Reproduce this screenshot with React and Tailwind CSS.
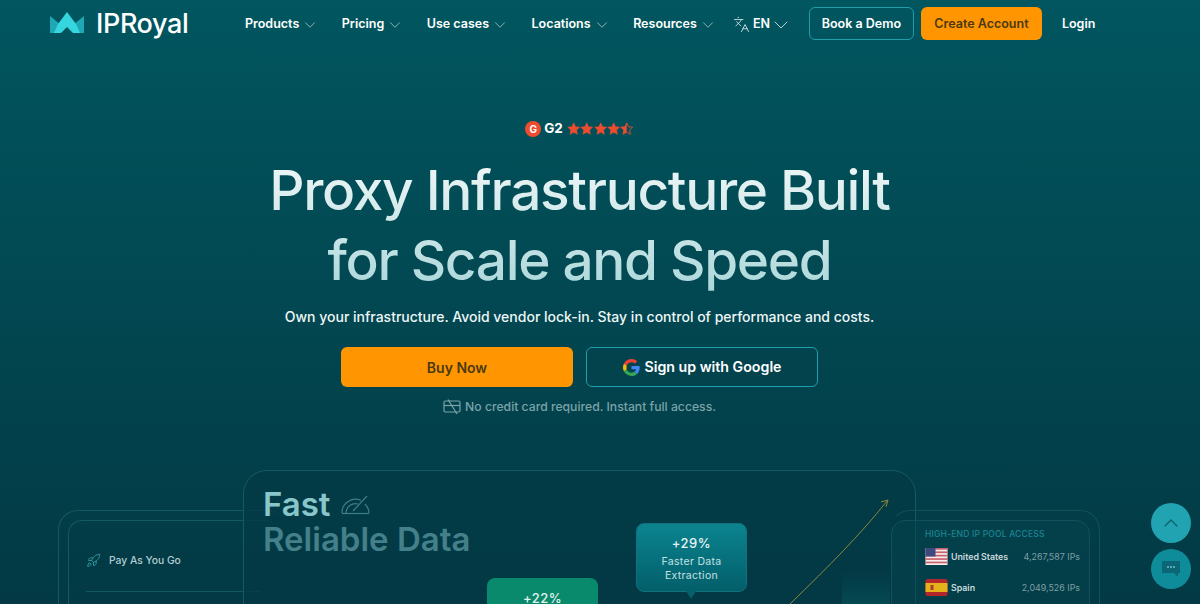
import React from "react";
import { ChevronDown, ChevronUp, Languages, Rocket } from "lucide-react";

const navItems = ["Products", "Pricing", "Use cases", "Locations", "Resources"];

function Logo() {
  return (
    <svg width="34" height="21" viewBox="0 0 34 21" className="mb-[3px]">
      <path d="M0 4 L11 13 L6 21 H0 Z" fill="#1ea7b5" />
      <path d="M34 4 L23 13 L28 21 H34 Z" fill="#1ea7b5" />
      <path d="M17 0 L26 12 L30 21 H23 L17 15 L11 21 H4 L8 12 Z" fill="#35d6e0" />
    </svg>
  );
}

function GoogleIcon() {
  return (
    <svg width="17" height="17" viewBox="0 0 48 48">
      <path fill="#EA4335" d="M24 9.500c3.500 0 6.700 1.200 9.200 3.600l6.900-6.900C35.900 2.400 30.500 0 24 0 14.600 0 6.500 5.400 2.600 13.200l8 6.200C12.500 13.700 17.800 9.500 24 9.500z" />
      <path fill="#4285F4" d="M47 24.500c0-1.600-.1-3.100-.4-4.500H24v9h12.900c-.6 3-2.200 5.500-4.700 7.200l7.700 6C44.400 37.900 47 31.800 47 24.500z" />
      <path fill="#FBBC05" d="M10.600 28.600c-.5-1.400-.8-3-.8-4.600s.3-3.200.8-4.600l-8-6.200C.9 16.500 0 20.100 0 24s.9 7.500 2.600 10.800l8-6.200z" />
      <path fill="#34A853" d="M24 48c6.500 0 11.900-2.100 15.900-5.800l-7.700-6c-2.200 1.500-4.900 2.300-8.200 2.300-6.200 0-11.500-4.200-13.400-9.900l-8 6.200C6.500 42.600 14.600 48 24 48z" />
    </svg>
  );
}

function G2Badge() {
  return (
    <span className="flex h-4 w-4 items-center justify-center rounded-full bg-[#ef4c2f] text-[10px] font-bold leading-none text-white">
      G
    </span>
  );
}

function Star({ half }) {
  return (
    <svg width="13.4" height="13.4" viewBox="0 0 24 24">
      <path
        d="M12 1.500l3.200 6.900 7.500.9-5.500 5.200 1.400 7.500L12 18.300l-6.600 3.700 1.400-7.500L1.300 9.300l7.500-.9z"
        fill={half ? "none" : "#ef4c2f"}
        stroke="#ef4c2f"
        strokeWidth={half ? 1.5 : 1}
      />
      {half && <path d="M12 1.500l-3.200 6.900-7.500.9 5.500 5.200-1.400 7.500L12 18.300z" fill="#ef4c2f" />}
    </svg>
  );
}

function NoCardIcon() {
  return (
    <svg width="18" height="16" viewBox="0 0 18 16" fill="none" stroke="#7ba3a8" strokeWidth="1.2">
      <rect x="1" y="2" width="16" height="11" rx="1.500" />
      <path d="M1 6.500H17" />
      <path d="M5 0.500 L14 15" />
    </svg>
  );
}

function GaugeIcon() {
  return (
    <svg width="29" height="21" viewBox="0 0 29 21" fill="none" stroke="#3f7f86" strokeWidth="1.2">
      <path d="M1 19 A13.500 13.500 0 0 1 20 6.500" />
      <path d="M5 19 A9.500 9.500 0 0 1 17 10" />
      <path d="M24 10 A13.500 13.500 0 0 1 28 19" />
      <path d="M1 19.500 H28" />
      <path d="M12 17 L26 2" />
    </svg>
  );
}

function UsFlag() {
  return (
    <svg width="23" height="17" viewBox="0 0 22 17">
      <rect width="22" height="17" fill="#f4eeee" />
      <rect y="0" width="22" height="1.700" fill="#c9606b" />
      <rect y="3.400" width="22" height="1.700" fill="#c9606b" />
      <rect y="6.800" width="22" height="1.700" fill="#c9606b" />
      <rect y="10.200" width="22" height="1.700" fill="#c9606b" />
      <rect y="13.600" width="22" height="1.700" fill="#c9606b" />
      <rect width="10" height="8.500" fill="#3c4a80" />
    </svg>
  );
}

function EsFlag() {
  return (
    <svg width="23" height="17" viewBox="0 0 22 17">
      <rect width="22" height="17" rx="2" fill="#b3262c" />
      <rect y="4" width="22" height="9" fill="#e5b21c" />
      <rect x="5" y="6" width="3" height="5" fill="#a8402a" />
    </svg>
  );
}

function CountryRow({ flag, name, count }) {
  return (
    <div className="flex items-center text-[8.8px] font-semibold">
      {flag}
      <span className="ml-[3px] text-[#c9dadd]">{name}</span>
      <span className="ml-auto text-[8.9px] font-normal text-[#7f9ea4]">{count}</span>
    </div>
  );
}

export default function App() {
  return (
    <div className="relative h-[604px] w-[1200px] overflow-hidden bg-gradient-to-b from-[#01565f] to-[#023944] font-['Inter',sans-serif] text-white">
      <header className="flex h-[47px] items-center pl-[50px] text-[12.5px] font-semibold">
        <div className="flex w-[195px] items-center gap-[12px]">
          <Logo />
          <span className="text-[27px] font-medium leading-none tracking-[-0.4px]">IPRoyal</span>
        </div>
        <nav className="mt-[2px] flex items-center gap-[22.5px]">
          {navItems.map((item) => (
            <span key={item} className="flex items-center gap-[2px]">
              {item}
              <ChevronDown size={18} strokeWidth={1} className="text-[#b9d2d6]" />
            </span>
          ))}
        </nav>
        <span className="ml-[16px] mt-[2px] flex items-center gap-[3px]">
          <Languages size={17} strokeWidth={1.25} className="text-[#cfe0e3]" />
          EN
          <ChevronDown size={24} strokeWidth={0.9} className="-ml-[4px] text-[#cfe0e3]" />
        </span>
        <button className="ml-[16px] h-[33px] w-[105px] rounded-md border border-[#1f9eab] pt-[2px]">Book a Demo</button>
        <button className="ml-[7px] h-[33px] w-[121px] rounded-md bg-[#ff9500] pt-[2px] text-[#4a3a12]">Create Account</button>
        <span className="ml-[20px] mt-[2px]">Login</span>
      </header>

      <main className="flex flex-col items-center pr-[41px]">
        <div className="mt-[74px] flex h-4 items-center gap-[3px]">
          <G2Badge />
          <span className="text-[13.5px] font-bold leading-none">G2</span>
          <span className="ml-[1px] flex">
            <Star />
            <Star />
            <Star />
            <Star />
            <Star half />
          </span>
        </div>
        <h1 className="mt-[18px] bg-gradient-to-b from-[#f2f8f8] to-[#a9d6d9] bg-clip-text text-center text-[55px] font-medium leading-[70px] tracking-[-1.35px] text-transparent">
          Proxy Infrastructure Built
          <br />
          for Scale and Speed
        </h1>
        <p className="mt-[11px] text-[14px] font-medium leading-[22px] text-[#eef6f6]">
          Own your infrastructure. Avoid vendor lock-in. Stay in control of performance and costs.
        </p>
        <div className="mt-[19px] flex gap-[13px]">
          <button className="h-[40px] w-[232px] rounded-md bg-[#ff9500] text-[14px] font-semibold text-[#4a3a12]">
            Buy Now
          </button>
          <button className="flex h-[40px] w-[232px] items-center justify-center gap-[5px] rounded-md border border-[#1f9eab] bg-[#03434e] text-[14.2px] font-semibold">
            <GoogleIcon />
            Sign up with Google
          </button>
        </div>
        <div className="mt-[11px] flex items-center gap-[4px] text-[12.2px] font-medium text-[#7ba3a8]">
          <NoCardIcon />
          No credit card required. Instant full access.
        </div>
      </main>

      {/* overlapping product cards at the bottom of the hero */}
      <div className="absolute left-[58px] top-[510px] h-[120px] w-[230px] rounded-[20px] border border-[#125a63] border-r-transparent p-[9px]">
        <div className="h-full rounded-[14px] border border-[#125a63] border-r-transparent px-[17px] pt-[32px]">
          <div className="flex items-center gap-[8px] text-[10.3px] font-medium text-[#b3cdd1]">
            <Rocket size={15} strokeWidth={1.25} className="text-[#3aa6b0]" />
            Pay As You Go
          </div>
          <div className="mt-[23px] h-px bg-[#125a63]" />
        </div>
      </div>

      <div className="absolute left-[243px] top-[470px] h-[160px] w-[673px] rounded-[24px] border border-[#125a63] bg-[#023a45]/80 px-[19px] pt-[16px]">
        <div className="flex items-center gap-[10px] text-[33px] font-semibold leading-[35px] text-[#88c6ca]">
          Fast
          <GaugeIcon />
        </div>
        <div className="text-[33px] font-semibold leading-[35px] text-[#44808a]">Reliable Data</div>
        <div className="absolute left-[598px] top-[100px] h-[60px] w-[48px] bg-gradient-to-b from-[#034a54]/0 to-[#075660]" />
      </div>

      <div className="absolute left-[890px] top-[510px] h-[120px] w-[210px] rounded-[20px] border border-[#0f525b] border-l-transparent py-[9px] pr-[9px]">
        <div className="h-full rounded-[14px] border border-[#0f525b] bg-[#03444e]/50 pl-[33px] pr-[9px] pt-[7px]">
          <div className="text-[8.5px] font-medium tracking-[0.2px] text-[#1c8592]">HIGH-END IP POOL ACCESS</div>
          <div className="mt-[7px] flex flex-col gap-[14px]">
            <CountryRow flag={<UsFlag />} name="United States" count="4,267,587 IPs" />
            <CountryRow flag={<EsFlag />} name="Spain" count="2,049,526 IPs" />
          </div>
        </div>
      </div>

      <svg className="absolute left-[780px] top-[495px]" width="115" height="109" viewBox="0 0 115 109">
        <path d="M10 109 C50 70 80 40 107 6" fill="none" stroke="#8a8a3c" strokeWidth="1" />
        <path d="M101 7 L108 5 L106 12" fill="none" stroke="#8a8a3c" strokeWidth="1" />
      </svg>

      <div className="absolute left-[487px] top-[578px] h-[50px] w-[111px] rounded-[8px] bg-[#0a8a6c] pt-[11px] text-center text-[13px] font-medium tracking-[0.5px] text-[#e4f2ee]">
        +22%
      </div>

      <div className="absolute left-[636px] top-[523px] h-[69px] w-[111px] rounded-[8px] border border-[#11717c] bg-gradient-to-b from-[#0b8490] to-[#035f6a] pt-[10px] text-center">
        <div className="text-[13px] font-medium leading-[18px] tracking-[0.5px] text-[#e4f2f3]">+29%</div>
        <div className="mt-[3px] text-[10.5px] leading-[14px] tracking-[0.3px] text-[#c4e0e3]">
          Faster Data
          <br />
          Extraction
        </div>
        <div className="absolute bottom-[-8px] left-[49px] h-0 w-0 border-x-[5px] border-t-[8px] border-x-transparent border-t-[#06606b]" />
      </div>

      <button className="absolute left-[1151px] top-[503px] flex h-10 w-10 items-center justify-center rounded-full bg-[#22a3b1] text-[#0d5f6b]">
        <ChevronUp size={24} strokeWidth={1.25} />
      </button>
      <button className="absolute left-[1151px] top-[549px] flex h-10 w-10 items-center justify-center rounded-full bg-[#0f8c9a]">
        <svg width="20" height="18" viewBox="0 0 20 18">
          <path d="M1 1 H19 V13 H17 V17 L13 13 H1 Z" fill="#0d6675" />
          <circle cx="7" cy="7" r="1" fill="#6fc1cc" />
          <circle cx="10" cy="7" r="1" fill="#6fc1cc" />
          <circle cx="13" cy="7" r="1" fill="#6fc1cc" />
        </svg>
      </button>
    </div>
  );
}
